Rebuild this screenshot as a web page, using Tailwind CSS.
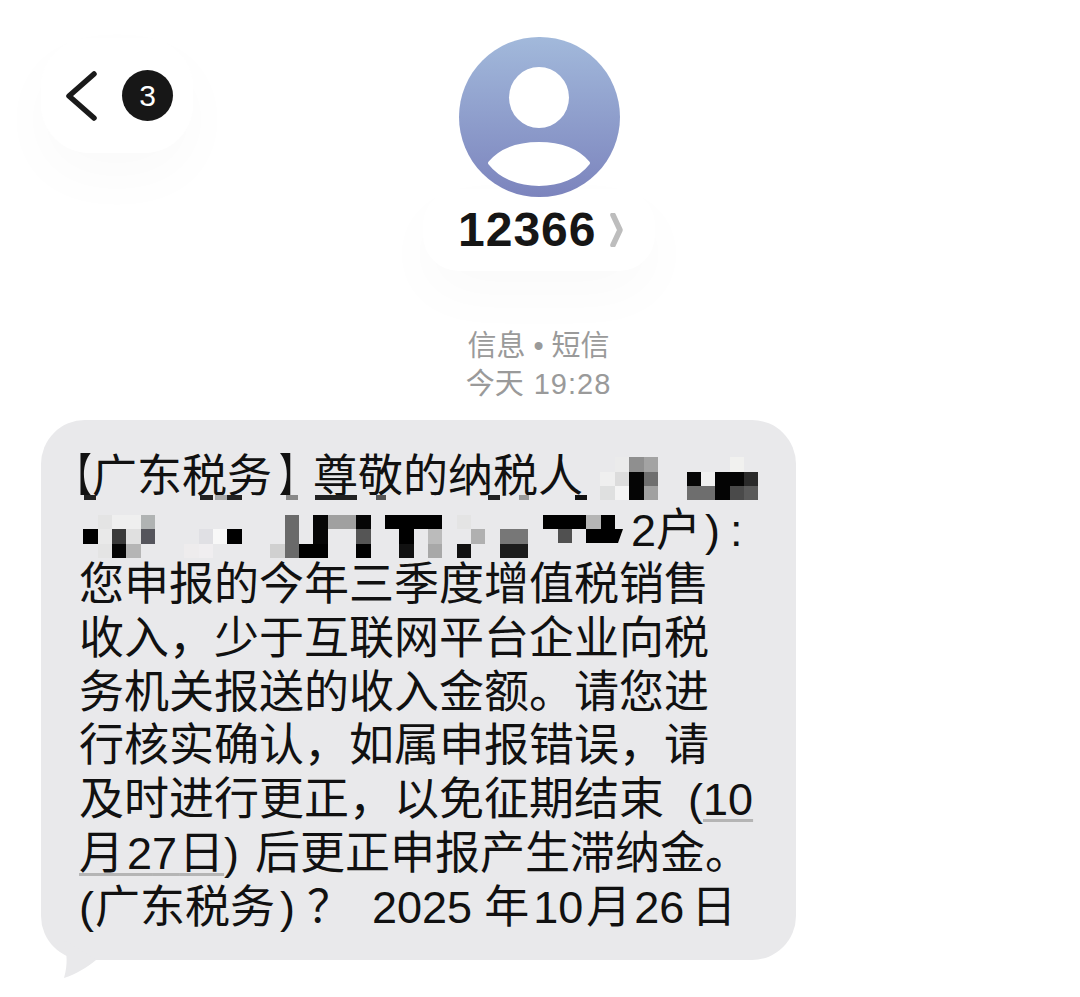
<!doctype html>
<html><head><meta charset="utf-8"><script src="https://cdn.jsdelivr.net/npm/@tailwindcss/browser@4"></script></head>
<body class="bg-white">
<div class="relative w-[1080px] h-[997px] overflow-hidden bg-white font-['Liberation_Sans','Noto_Sans_CJK_SC',sans-serif]">
  <div class="flex h-[272px] items-start">
    <div class="ml-[41px] mt-[38px] flex h-[115px] w-[152px] items-center rounded-[48px] bg-white pl-[24px] shadow-[0_24px_60px_rgba(0,0,0,0.025)]">
      <svg class="h-[50px] w-[32px]" viewBox="0 0 32 50"><path d="M29 3 L4 25 L29 47" fill="none" stroke="#1a1a1a" stroke-width="5.500" stroke-linecap="round" stroke-linejoin="round"/></svg>
      <div class="ml-[25px] flex h-[51px] w-[51px] items-center justify-center rounded-full bg-[#171717] text-[30px] text-white">3</div>
    </div>
    <div class="ml-[230px] mt-[37px] flex w-[232px] flex-col items-center">
      <div class="relative z-10 h-[160px] w-[161px] rounded-full bg-gradient-to-b from-[#a2b9db] to-[#7c84bd]">
        <svg class="h-full w-full" viewBox="0 0 161 160"><ellipse cx="80" cy="60.500" rx="30" ry="30.500" fill="#fff"/><path d="M31 126 C42 113 60 107 80 107 C100 107 118 113 129 126 C118 140 100 147 80 147 C60 147 42 140 31 126 Z" fill="#fff" stroke="#fff" stroke-width="4" stroke-linejoin="round"/></svg>
      </div>
      <div class="-mt-[8px] flex h-[82px] w-[232px] items-center gap-[14px] rounded-[36px] bg-white pl-[35px] shadow-[0_24px_60px_rgba(0,0,0,0.025)]">
        <span class="text-[48px] font-bold leading-none tracking-[1px] text-[#161616]">12366</span>
        <svg class="h-[34px] w-[14px]" viewBox="0 0 14 34"><path d="M3 2 L10 17 L3 32" fill="none" stroke="#bdbdbd" stroke-width="5.500" stroke-linecap="round" stroke-linejoin="round"/></svg>
      </div>
    </div>
  </div>
  <div class="mt-[55px] flex flex-col items-center pr-[3px] text-[29px] leading-[38px] text-[#9a9a9a]">
    <div>信息<span class="mx-[8px]">•</span>短信</div>
    <div>今天<span class="ml-[10px] tracking-[1px]">19:28</span></div>
  </div>
  <div class="relative ml-[41px] mt-[17px] h-[540px] w-[755px] rounded-[44px] bg-[#e9e9eb] pl-[38px] pt-[30px] text-[45px] leading-[53.875px] whitespace-nowrap text-[#111]">
    <div><span class="-ml-[21px] inline-block origin-left scale-x-75">【</span><span class="-ml-[11px]">广东税务</span><span class="ml-[7px] inline-block origin-left scale-x-75">】</span><span class="-ml-[11px]">尊敬的纳税人</span></div>
    <div class="pl-[552px]">2户<span class="ml-[4px]">)</span><span class="ml-[10px]">:</span></div>
    <div>您申报的今年三季度增值税销售</div>
    <div>收入，少于互联网平台企业向税</div>
    <div>务机关报送的收入金额。请您进</div>
    <div>行核实确认，如属申报错误，请</div>
    <div>及时进行更正，以免征期结束<span class="ml-[24px]">(</span><span class="underline decoration-[#b5b5b5] decoration-[3px] underline-offset-[4px] [text-decoration-skip-ink:none]">10</span></div>
    <div><span class="underline decoration-[#b5b5b5] decoration-[3px] underline-offset-[4px] [text-decoration-skip-ink:none]"><span class="tracking-[3px]">月</span>2<span class="tracking-[2px]">7</span>日</span>)<span class="ml-[16px]">后更正申报产生滞纳金。</span></div>
    <div>(<span class="ml-[1px]">广东税务</span><span class="ml-[5px]">)</span><span class="ml-[12px]">？</span><span class="ml-[20px]">2025</span><span class="ml-[12px]">年</span><span class="ml-[4px]">10</span><span class="ml-[3px]">月</span><span class="ml-[3px]">26</span><span class="ml-[7px]">日</span></div>
    <svg class="absolute left-[17px] top-[520px] h-[40px] w-[50px]" viewBox="0 0 50 40"><path d="M6 0 C9 14 10 24 6 38 C18 34 28 28 38 20 Z" fill="#e9e9eb"/></svg>
  </div>
  <svg class="absolute left-0 top-0 blur-[0.5px]" width="1080" height="997" viewBox="0 0 1080 997">
    <g shape-rendering="crispEdges">
      <rect x="615" y="457" width="14" height="15" fill="#ebebeb"/>
      <rect x="600" y="472" width="15" height="14" fill="#efefef"/><rect x="615" y="472" width="14" height="14" fill="#dcdcdc"/>
      <rect x="600" y="486" width="15" height="14" fill="#dfe0e0"/><rect x="615" y="486" width="14" height="14" fill="#f4f4f4"/>
      <rect x="629" y="457" width="15" height="15" fill="#8f8f8f"/><rect x="644" y="457" width="14" height="15" fill="#a3a3a3"/>
      <rect x="629" y="472" width="15" height="14" fill="#050505"/><rect x="644" y="472" width="14" height="14" fill="#6e6e6e"/>
      <rect x="629" y="486" width="15" height="14" fill="#050505"/><rect x="644" y="486" width="14" height="14" fill="#a0a0a0"/>
      <rect x="730" y="457" width="14" height="15" fill="#f1f1ef"/>
      <rect x="687" y="472" width="14" height="14" fill="#060606"/><rect x="701" y="472" width="14" height="14" fill="#f0f0f0"/><rect x="715" y="472" width="15" height="14" fill="#040404"/><rect x="730" y="472" width="14" height="14" fill="#040404"/><rect x="744" y="472" width="14" height="14" fill="#2a2a2a"/>
      <rect x="687" y="486" width="14" height="14" fill="#6e6e6e"/><rect x="701" y="486" width="14" height="14" fill="#6e6e6e"/><rect x="715" y="486" width="15" height="14" fill="#040404"/><rect x="730" y="486" width="14" height="14" fill="#4a4a4a"/><rect x="744" y="486" width="14" height="14" fill="#5a5a5a"/>

      <rect x="84" y="495" width="12" height="5" fill="#222"/><rect x="200" y="495" width="13" height="5" fill="#222"/><rect x="215" y="495" width="12" height="5" fill="#aaa"/><rect x="227" y="495" width="15" height="5" fill="#222"/><rect x="286" y="495" width="12" height="5" fill="#888"/><rect x="315" y="495" width="42" height="5" fill="#222"/><rect x="376" y="495" width="10" height="5" fill="#555"/><rect x="488" y="495" width="12" height="5" fill="#222"/><rect x="519" y="495" width="10" height="5" fill="#999"/><rect x="575" y="495" width="12" height="5" fill="#111"/>

      <rect x="98" y="515" width="14" height="14" fill="#e4e4e4"/><rect x="112" y="515" width="14" height="14" fill="#efefef"/><rect x="126" y="515" width="15" height="14" fill="#efefef"/><rect x="141" y="515" width="14" height="14" fill="#b0b3b3"/>
      <rect x="83" y="529" width="15" height="15" fill="#000"/><rect x="98" y="529" width="14" height="15" fill="#e9e9e9"/><rect x="112" y="529" width="14" height="15" fill="#3a3a3a"/><rect x="126" y="529" width="15" height="15" fill="#e0e0e0"/><rect x="141" y="529" width="14" height="15" fill="#55555c"/>
      <rect x="98" y="544" width="14" height="14" fill="#e4e4e4"/><rect x="112" y="544" width="14" height="14" fill="#050505"/><rect x="126" y="544" width="15" height="14" fill="#b5b5b5"/>
      <rect x="199" y="529" width="14" height="15" fill="#e0e0e4"/><rect x="213" y="529" width="14" height="15" fill="#f8f8f8"/><rect x="227" y="529" width="15" height="15" fill="#000"/>
      <rect x="184" y="544" width="15" height="14" fill="#eeeced"/><rect x="199" y="544" width="14" height="14" fill="#f0eef0"/>

      <rect x="285" y="515" width="14" height="14" fill="#6a6a6a"/><rect x="313" y="515" width="15" height="14" fill="#060606"/><rect x="328" y="515" width="14" height="14" fill="#a0a0a0"/><rect x="342" y="515" width="14" height="14" fill="#a0a0a0"/><rect x="356" y="515" width="15" height="14" fill="#060606"/>
      <rect x="285" y="529" width="14" height="15" fill="#6a6a6a"/><rect x="313" y="529" width="15" height="15" fill="#060606"/><rect x="356" y="529" width="15" height="15" fill="#555"/>
      <rect x="270" y="544" width="15" height="14" fill="#d0d0d0"/><rect x="285" y="544" width="14" height="14" fill="#6a6a6a"/><rect x="299" y="544" width="14" height="14" fill="#000"/><rect x="313" y="544" width="15" height="14" fill="#000"/><rect x="356" y="544" width="15" height="14" fill="#000"/>

      <rect x="385" y="515" width="57" height="14" fill="#000"/>
      <rect x="399" y="529" width="15" height="15" fill="#000"/><rect x="428" y="529" width="14" height="15" fill="#bbb"/>
      <rect x="399" y="544" width="15" height="14" fill="#111"/><rect x="428" y="544" width="14" height="14" fill="#a8a8a8"/>
      <rect x="457" y="515" width="14" height="14" fill="#e4e4e4"/><rect x="471" y="529" width="14" height="15" fill="#b0b0b0"/><rect x="457" y="544" width="14" height="14" fill="#111"/>
      <rect x="500" y="529" width="28" height="15" fill="#777"/><rect x="500" y="544" width="28" height="14" fill="#1c1c1c"/>

      <rect x="543" y="515" width="43" height="14" fill="#000"/><rect x="586" y="515" width="15" height="14" fill="#b5b5b5"/><rect x="601" y="515" width="14" height="14" fill="#000"/>
      <rect x="558" y="529" width="14" height="14" fill="#505050"/>
    </g>
    <path d="M586 529 H623 L618 543 H586 Z" fill="#000"/>
  </svg>
</div>
</body></html>
